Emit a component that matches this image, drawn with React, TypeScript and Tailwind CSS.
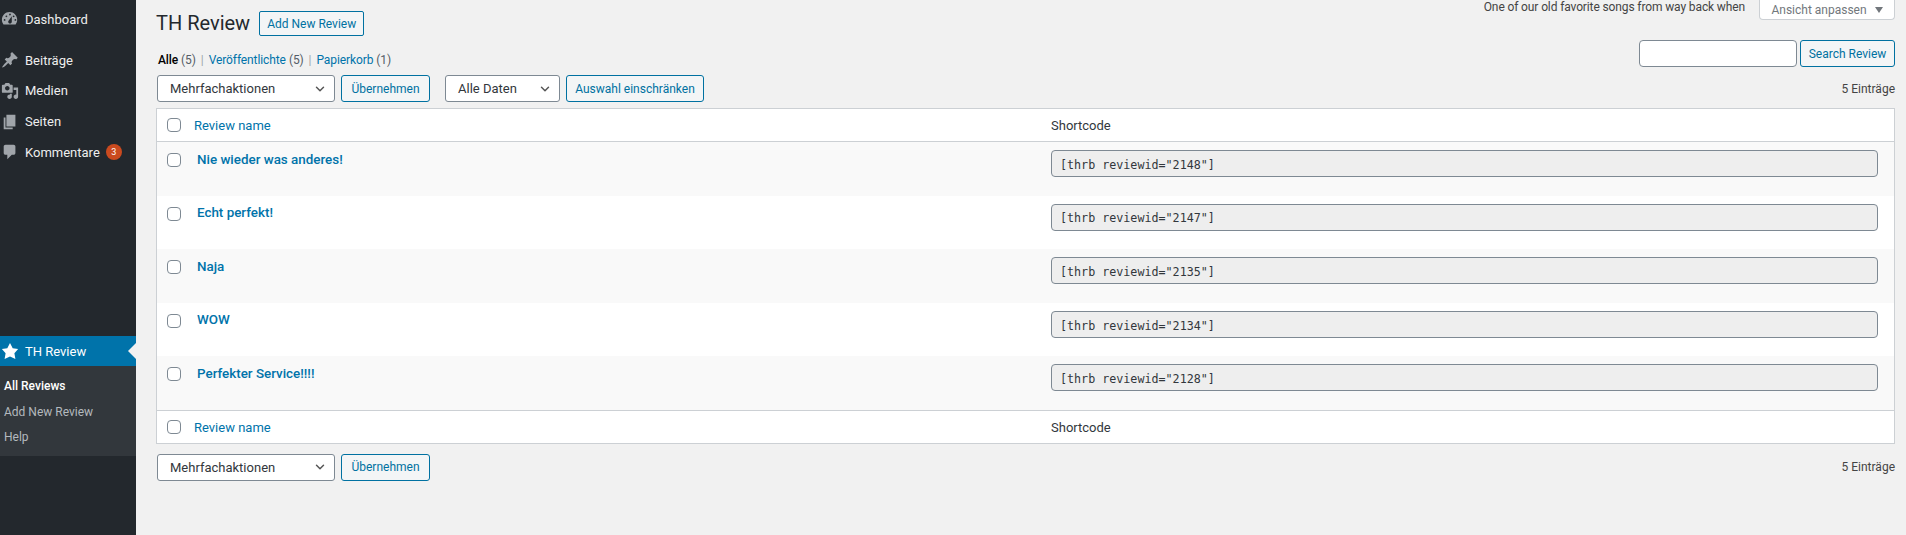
import { ChevronDown } from 'lucide-react';

const reviews = [
  { name: 'Nie wieder was anderes!', id: '2148' },
  { name: 'Echt perfekt!', id: '2147' },
  { name: 'Naja', id: '2135' },
  { name: 'WOW', id: '2134' },
  { name: 'Perfekter Service!!!!', id: '2128' },
];

function Icon({ d, fill = '#a0a5aa' }: { d: string; fill?: string }) {
  return (
    <svg viewBox="0 0 20 20" className="w-[18px] h-[18px]" fill={fill}>
      <path fillRule="evenodd" d={d} />
    </svg>
  );
}

const icons = {
  dashboard:
    'M3.760 16h12.480c1.100-1.430 1.760-3.210 1.760-5.140 0-4.710-3.820-8.530-8.530-8.530-4.700 0-8.470 3.820-8.470 8.530 0 1.930.66 3.710 1.760 5.140zM10 4c.55 0 1 .45 1 1s-.45 1-1 1-1-.45-1-1 .45-1 1-1zM6 6c.55 0 1 .45 1 1s-.45 1-1 1-1-.45-1-1 .45-1 1-1zm8 0c.55 0 1 .45 1 1s-.45 1-1 1-1-.45-1-1 .45-1 1-1zm-5.370 5.550L12 7v6c0 1.100-.9 2-2 2s-2-.9-2-2c0-.57.24-1.080.63-1.450zM4 10c.55 0 1 .45 1 1s-.45 1-1 1-1-.45-1-1 .45-1 1-1zm12 0c.55 0 1 .45 1 1s-.45 1-1 1-1-.45-1-1 .45-1 1-1z',
  pin: 'M10.440 3.020l1.820-1.820 6.360 6.350-1.830 1.820c-1.050-.68-2.480-.57-3.410.36l-.75.75c-.92.93-1.040 2.350-.35 3.410l-1.830 1.820-2.410-2.410-2.800 2.790c-.42.42-3.380 2.710-3.800 2.290s1.860-3.390 2.280-3.810l2.790-2.790L4.100 9.360l1.830-1.820c1.050.69 2.480.57 3.400-.36l.75-.75c.93-.92 1.040-2.350.36-3.410z',
  media:
    'M13 11V4c0-.55-.45-1-1-1h-1.670L9 1H5L3.670 3H2c-.55 0-1 .45-1 1v7c0 .55.45 1 1 1h10c.55 0 1-.45 1-1zM7 4.500c1.380 0 2.500 1.120 2.500 2.500S8.380 9.500 7 9.500 4.500 8.380 4.500 7 5.620 4.500 7 4.500zM14 6h5v10.500c0 1.380-1.120 2.500-2.500 2.500S14 17.880 14 16.500s1.120-2.500 2.500-2.500c.17 0 .34.020.5.050V9h-3V6zm-4 8.050V13h2v3.500c0 1.380-1.120 2.500-2.500 2.500S7 17.880 7 16.500 8.120 14 9.500 14c.17 0 .34.020.5.050z',
  pages: 'M6 15V2h10v13H6zm-1 1h8v2H3V5h2v11z',
  comment:
    'M5 2h9c1.100 0 2 .9 2 2v7c0 1.100-.9 2-2 2h-2l-5 5v-5H5c-1.100 0-2-.9-2-2V4c0-1.100.9-2 2-2z',
  star: 'M10 1l3 6 6 .75-4.120 4.620L16 19l-6-3-6 3 1.120-6.630L1 7.750 7 7z',
};

function MenuItem({ icon, label, badge }: { icon: string; label: string; badge?: string }) {
  return (
    <div className="flex items-center h-[30.700px] text-[#eeeeee]">
      <span className="w-[25px] pl-[1px] flex items-center"><Icon d={icon} /></span>
      <span>{label}</span>
      {badge && (
        <span className="ml-[6px] w-[16px] h-[16px] rounded-full bg-[#ca4a1f] text-white text-[9px] flex items-center justify-center">
          {badge}
        </span>
      )}
    </div>
  );
}

function Checkbox() {
  return (
    <input
      type="checkbox"
      className="appearance-none w-[14px] h-[14px] rounded-[4px] border border-[#7e8993] bg-white shrink-0"
    />
  );
}

function Button({ children, width }: { children: React.ReactNode; width: string }) {
  return (
    <button className={`${width} h-[27px] rounded-[3px] border border-[#0071a1] bg-[#f3f5f6] text-[#0071a1] text-[12px] whitespace-nowrap`}>
      {children}
    </button>
  );
}

function Select({ label, width }: { label: string; width: string }) {
  return (
    <div className={`${width} h-[27px] flex items-center justify-between pl-[12px] pr-[7px] rounded-[3px] border border-[#7e8993] bg-white text-[#32373c]`}>
      <span>{label}</span>
      <ChevronDown className="w-[14px] h-[14px] text-[#555555]" strokeWidth={2.5} />
    </div>
  );
}

function TableHeadRow({ border }: { border: string }) {
  return (
    <div className={`flex items-center h-[33px] bg-white ${border}`}>
      <div className="w-[37px] pl-[10px] flex"><Checkbox /></div>
      <a className="w-[857px] pt-[2px] text-[#0073aa]">Review name</a>
      <span className="pt-[2px] text-[#32373c]">Shortcode</span>
    </div>
  );
}

export default function App() {
  return (
    <div className="flex min-h-screen bg-[#f1f1f1] text-[13px] text-[#444444] font-['Roboto',sans-serif]">
      <aside className="w-[136px] shrink-0 bg-[#23282d]">
        <div className="h-[45px]">
          <div className="pt-[4px]">
            <MenuItem icon={icons.dashboard} label="Dashboard" />
          </div>
        </div>
        <MenuItem icon={icons.pin} label="Beiträge" />
        <MenuItem icon={icons.media} label="Medien" />
        <MenuItem icon={icons.pages} label="Seiten" />
        <MenuItem icon={icons.comment} label="Kommentare" badge="3" />
        <div className="h-[168.200px]" />
        <div className="flex items-center h-[30px] bg-[#0073aa] text-white">
          <span className="w-[25px] pl-[1px] flex items-center"><Icon d={icons.star} fill="#ffffff" /></span>
          <span className="flex-1 pt-[1px]">TH Review</span>
          <span className="w-0 h-0 border-y-[8px] border-y-transparent border-r-[8px] border-r-[#f1f1f1]" />
        </div>
        <div className="h-[90px] bg-[#32373c] pt-[7px] pl-[4px] text-[12px] text-[#b4b9be]">
          <div className="h-[26px] flex items-center font-medium text-white">All Reviews</div>
          <div className="h-[26px] flex items-center">Add New Review</div>
          <div className="h-[25px] flex items-center">Help</div>
        </div>
      </aside>

      <main className="flex-1 min-w-0 pl-[20px] pr-[11px]">
        <div className="flex justify-between items-start h-[40px]">
          <div className="flex items-center gap-[9px] pt-[11px]">
            <h1 className="text-[20px] leading-[25px] text-[#23282d]">TH Review</h1>
            <button className="w-[105px] h-[25px] rounded-[2px] border border-[#0071a1] bg-[#f3f5f6] text-[#0071a1] text-[12px]">
              Add New Review
            </button>
          </div>
          <div className="flex items-start">
            <span className="text-[12px] leading-[15px] tracking-[-0.12px] text-[#444444] mr-[14px]">
              One of our old favorite songs from way back when
            </span>
            <div className="w-[136px] h-[20px] flex items-center justify-center gap-[8px] bg-white border border-t-0 border-[#ccd0d4] rounded-b-[4px] text-[12px] text-[#72777c]">
              Ansicht anpassen
              <span className="w-0 h-0 border-x-[4px] border-x-transparent border-t-[6px] border-t-[#72777c]" />
            </div>
          </div>
        </div>

        <div className="flex justify-between items-start h-[35px]">
          <div className="pt-[11px] pl-[2px] flex items-center text-[12px] tracking-[-0.1px] leading-[18px]">
            <span className="font-medium text-[#000000]">Alle</span>
            <span className="ml-[3px] text-[#555d66]">(5)</span>
            <span className="mx-[5px] text-[#a0a5aa]">|</span>
            <a className="text-[#0073aa]">Veröffentlichte</a>
            <span className="ml-[3px] text-[#555d66]">(5)</span>
            <span className="mx-[5px] text-[#a0a5aa]">|</span>
            <a className="text-[#0073aa]">Papierkorb</a>
            <span className="ml-[3px] text-[#555d66]">(1)</span>
          </div>
          <div className="flex gap-[3px]">
            <input className="w-[158px] h-[27px] rounded-[4px] border border-[#7e8993] bg-white" />
            <Button width="w-[95px]">Search Review</Button>
          </div>
        </div>

        <div className="flex justify-between h-[33px]">
          <div className="flex">
            <div className="ml-[1px]"><Select label="Mehrfachaktionen" width="w-[178px]" /></div>
            <div className="ml-[6px]"><Button width="w-[89px]">Übernehmen</Button></div>
            <div className="ml-[15px]"><Select label="Alle Daten" width="w-[115px]" /></div>
            <div className="ml-[6px]"><Button width="w-[138px]">Auswahl einschränken</Button></div>
          </div>
          <span className="pt-[5px] text-[12px]">5 Einträge</span>
        </div>

        <div className="border border-[#ccd0d4]">
          <TableHeadRow border="border-b border-[#ccd0d4]" />
          {reviews.map((review, i) => (
            <div key={review.id} className={`flex items-start h-[53.600px] ${i % 2 === 0 ? 'bg-[#f9f9f9]' : 'bg-white'}`}>
              <div className="w-[40px] pl-[10px] pt-[11px] flex"><Checkbox /></div>
              <a className="w-[854px] pt-[7.600px] text-[13.400px] font-medium text-[#0073aa]">{review.name}</a>
              <div className="flex-1 pt-[8px] pr-[16px]">
                <div className="h-[27px] flex items-center pl-[8px] pt-[4px] rounded-[4px] border border-[#7e8993] bg-[#eeeeee] font-['DejaVu_Sans_Mono',monospace] text-[11.700px] text-[#32373c]">
                  [thrb reviewid="{review.id}"]
                </div>
              </div>
            </div>
          ))}
          <TableHeadRow border="border-t border-[#ccd0d4]" />
        </div>

        <div className="flex justify-between mt-[10px]">
          <div className="flex">
            <div className="ml-[1px]"><Select label="Mehrfachaktionen" width="w-[178px]" /></div>
            <div className="ml-[6px]"><Button width="w-[89px]">Übernehmen</Button></div>
          </div>
          <span className="pt-[4px] text-[12px]">5 Einträge</span>
        </div>
      </main>
    </div>
  );
}
